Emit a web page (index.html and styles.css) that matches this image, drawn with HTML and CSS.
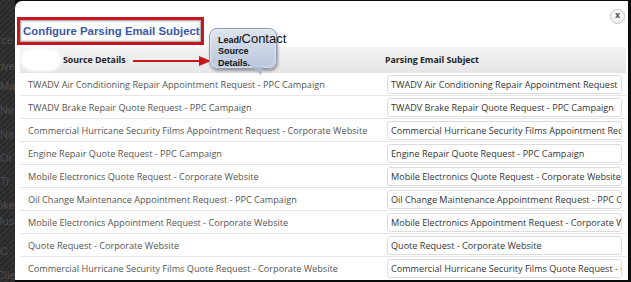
FILE: index.html
```html
<!DOCTYPE html>
<html>
<head>
<meta charset="utf-8">
<link rel="stylesheet" href="styles.css">
</head>
<body>
<div class="frame">
  <div class="backdrop">
    <div class="bg-line l1">Source</div>
    <div class="bg-line l2">Active</div>
    <div class="bg-line l3">Ma</div>
    <div class="bg-line l4">Ne</div>
    <div class="bg-line l5">Ne</div>
    <div class="bg-line l6">Or</div>
    <div class="bg-line l7">Tr</div>
    <div class="bg-line l8">Broke</div>
    <div class="bg-line l9">Just</div>
    <div class="bg-line l10">C</div>
    <div class="bg-line l11">Client</div>
  </div>
  <div class="modal">
    <div class="modal-head">
      <div class="title-box"><h1 class="title">Configure Parsing Email Subject</h1></div>
      <div class="close">x</div>
    </div>
    <div class="table">
      <div class="th th-src"><span class="blob"></span>Source Details</div>
      <div class="th th-subj">Parsing Email Subject</div>

      <div class="td src">TWADV Air Conditioning Repair Appointment Request - PPC Campaign</div>
      <div class="td subj"><div class="input">TWADV Air Conditioning Repair Appointment Request</div></div>

      <div class="td src">TWADV Brake Repair Quote Request - PPC Campaign</div>
      <div class="td subj"><div class="input">TWADV Brake Repair Quote Request - PPC Campaign</div></div>

      <div class="td src">Commercial Hurricane Security Films Appointment Request - Corporate Website</div>
      <div class="td subj"><div class="input">Commercial Hurricane Security Films Appointment Request - Corporate Website</div></div>

      <div class="td src">Engine Repair Quote Request - PPC Campaign</div>
      <div class="td subj"><div class="input">Engine Repair Quote Request - PPC Campaign</div></div>

      <div class="td src">Mobile Electronics Quote Request - Corporate Website</div>
      <div class="td subj"><div class="input">Mobile Electronics Quote Request - Corporate Website</div></div>

      <div class="td src">Oil Change Maintenance Appointment Request - PPC Campaign</div>
      <div class="td subj"><div class="input">Oil Change Maintenance Appointment Request - PPC Campaign</div></div>

      <div class="td src">Mobile Electronics Appointment Request - Corporate Website</div>
      <div class="td subj"><div class="input">Mobile Electronics Appointment Request - Corporate Website</div></div>

      <div class="td src">Quote Request - Corporate Website</div>
      <div class="td subj"><div class="input">Quote Request - Corporate Website</div></div>

      <div class="td src last">Commercial Hurricane Security Films Quote Request - Corporate Website</div>
      <div class="td subj last"><div class="input">Commercial Hurricane Security Films Quote Request - Corporate Website</div></div>
    </div>

    <div class="arrow">
      <span class="arrow-line"></span><span class="arrow-head"></span>
    </div>
    <div class="callout">
      <div class="callout-text"><b class="small">Lead/</b><span class="big">Contact</span></div>
      <div class="callout-text line"><b class="small">Source</b></div>
      <div class="callout-text line"><b class="small">Details.</b></div>
      <span class="tail"></span>
    </div>
  </div>
</div>
</body>
</html>
```

FILE: styles.css
```css
* { box-sizing: border-box; }
html, body { margin: 0; padding: 0; }
body {
  width: 631px;
  height: 282px;
  overflow: hidden;
  background: #0c0c0c;
}
.frame {
  display: flex;
  width: 631px;
  height: 282px;
  padding: 1px 3px 2px 0;
}
.backdrop {
  width: 15px;
  flex: none;
  margin-top: -1px;
  margin-bottom: -2px;
  overflow: hidden;
  background: repeating-linear-gradient(135deg, #2a2a2a 0 2px, #323232 2px 4px);
  font-family: "Liberation Sans", Arial, sans-serif;
  font-size: 11px;
  color: #4e4e4e;
  padding-top: 34px;
}
.bg-line { white-space: nowrap; height: 24px; line-height: 12px; direction: rtl; text-align: left; }
.l1 { height: 26px; margin-right: 2px; }
.l2 { height: 20px; margin-right: 0; }
.l3 { margin-right: -6px; }
.l4 { margin-right: -6px; }
.l5 { margin-right: -6px; }
.l6 { height: 23px; margin-right: -6px; }
.l7 { margin-right: -8px; }
.l8 { height: 16px; }
.l9 { height: 30px; margin-right: -2px; }
.l10 { margin-right: -6px; }
.l11 { margin-right: -10px; }

.modal {
  position: relative;
  flex: 1;
  background: #fff;
  border-top-left-radius: 7px;
  padding: 0 2px 0 5px;
  display: flex;
  flex-direction: column;
  font-family: "Open Sans", "Noto Sans", sans-serif;
}
.modal-head {
  display: flex;
  justify-content: space-between;
  align-items: flex-start;
  height: 46px;
  margin-left: -3px;
}
.title-box {
  margin-top: 16px;
  width: 187px;
  height: 28px;
  border: 3px solid #c8161d;
  box-shadow: inset 0 0 2px 1px #9a9a9a;
  display: flex;
  align-items: center;
  padding-left: 3px;
}
.title {
  margin: 0;
  font-family: "Liberation Sans", Arial, sans-serif;
  font-weight: bold;
  font-size: 11.4px;
  color: #3a57a6;
  white-space: nowrap;
}
.close {
  margin-top: 8px;
  margin-right: 1px;
  width: 15px;
  height: 15px;
  border-radius: 50%;
  border: 1px solid #c4c4c4;
  background: linear-gradient(#fff, #eee);
  font-family: "DejaVu Sans", sans-serif;
  font-weight: bold;
  font-size: 8px;
  line-height: 12px;
  text-align: center;
  color: #555;
}
.table {
  display: grid;
  grid-template-columns: 362px 1fr;
  grid-auto-rows: 23px;
  grid-template-rows: 26px;
}
.th {
  background: linear-gradient(#f4f4f4, #e6e6e6);
  border-bottom: 1px solid #e2e2e2;
  font-family: "Open Sans", sans-serif;
  font-weight: bold;
  font-size: 8.8px;
  color: #222;
  display: flex;
  align-items: center;
  white-space: nowrap;
}
.th-src { padding-left: 43px; position: relative; }
.th-subj { padding-left: 3px; }
.blob {
  position: absolute;
  left: 3px;
  top: 4px;
  width: 36px;
  height: 18px;
  background: #fff;
  border-radius: 9px;
  box-shadow: 0 0 3px 2px #fff;
}
.td {
  border-bottom: 1px solid #e6e6e6;
  display: flex;
  align-items: center;
  white-space: nowrap;
  overflow: hidden;
  font-size: 9.15px;
  color: #555;
}
.td.last { border-bottom: none; }
.src { padding-left: 8px; }
.subj { padding-left: 5px; padding-right: 4px; }
.input {
  width: 235px;
  height: 19px;
  border: 1px solid #dcdcdc;
  border-radius: 3px;
  padding-left: 3px;
  line-height: 17px;
  overflow: hidden;
  white-space: nowrap;
  color: #333;
  font-size: 9.1px;
}

/* annotation overlay */
.arrow {
  position: absolute;
  left: 118px;
  top: 55px;
  display: flex;
  align-items: center;
  height: 10px;
}
.arrow-line { width: 66px; height: 2px; background: #c8161d; }
.arrow-head {
  width: 0; height: 0;
  border-top: 5px solid transparent;
  border-bottom: 5px solid transparent;
  border-left: 12px solid #c8161d;
}
.callout {
  position: absolute;
  left: 194px;
  top: 27px;
  width: 68px;
  height: 41px;
  border-radius: 8px;
  border: 1px solid #8d9bb2;
  background: linear-gradient(#dde4ef, #b9c6db);
  box-shadow: 1px 2px 3px rgba(0,0,0,0.35), inset 0 0 3px #fff;
  padding: 2px 0 0 8px;
}
.callout-text {
  font-family: "Liberation Sans", Arial, sans-serif;
  color: #111;
  line-height: 13px;
  height: 12px;
  white-space: nowrap;
}
.callout-text.line { line-height: 11px; height: 12px; }
.small { font-size: 9px; font-weight: bold; }
.big { font-size: 13px; }
.tail {
  position: absolute;
  left: 42px;
  top: 38px;
  width: 0; height: 0;
  border-top: 8px solid #aab7cd;
  border-left: 9px solid transparent;
  border-right: 2px solid transparent;
}
```
